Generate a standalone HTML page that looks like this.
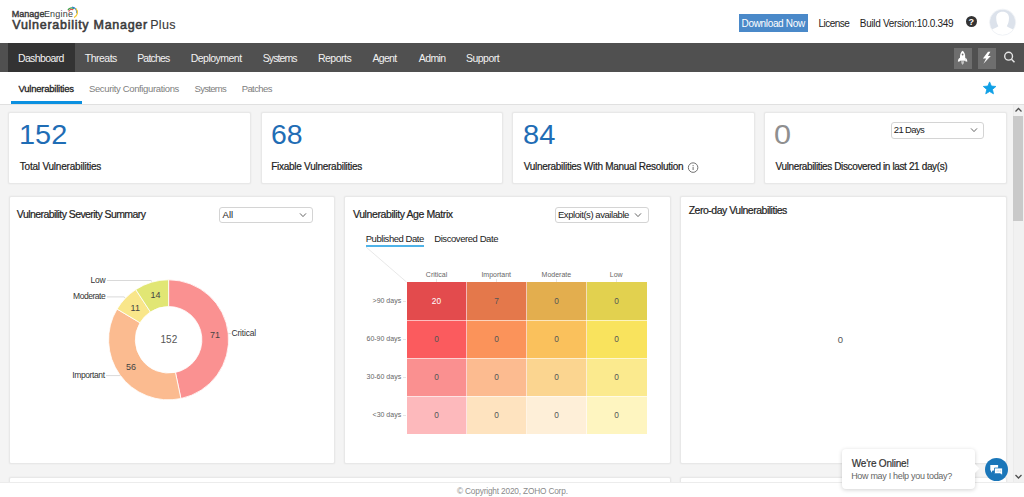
<!DOCTYPE html><html><head><meta charset="utf-8"><style>
*{margin:0;padding:0;box-sizing:border-box}
html,body{width:1024px;height:497px;overflow:hidden;background:#fff;font-family:"Liberation Sans",sans-serif}
.t{position:absolute;line-height:0;white-space:nowrap}
.b{position:absolute}
.card{position:absolute;background:#fff;border:1px solid #e8e8e8;border-radius:2px;box-shadow:0 0 2px rgba(0,0,0,0.07)}
.dd{position:absolute;background:#fff;border:1px solid #d4d4d4;border-radius:3px}
</style></head><body>
<div class="b" style="left:0;top:0;width:1024px;height:43px;background:#fff"></div>
<div class="t" style="left:11.68px;top:13.98px;font-size:9px;color:#3b3b3b;letter-spacing:0.038px;-webkit-text-stroke:0.4px #3b3b3b;">Manage</div>
<div class="t" style="left:43.88px;top:13.98px;font-size:9px;color:#3b3b3b;letter-spacing:0.238px;">Engine</div>
<svg class="b" style="left:0;top:0" width="90" height="25"><path d="M68.71 11.60 A3.1 3.1 0 0 1 73.25 9.72" stroke="#e8504f" stroke-width="1.25" fill="none"/><path d="M67.89 10.20 A4.4 4.4 0 0 1 73.90 8.59" stroke="#3fa34d" stroke-width="1.25" fill="none"/><path d="M72.15 7.22 A5.2 5.2 0 0 1 76.82 13.30" stroke="#2a7bd0" stroke-width="1.25" fill="none"/><path d="M75.73 8.37 A5.7 5.7 0 0 1 74.11 17.57" stroke="#f5cd3a" stroke-width="1.25" fill="none"/></svg>
<div class="t" style="left:12.34px;top:24.97px;font-size:12.5px;color:#3b3b3b;letter-spacing:0.719px;-webkit-text-stroke:0.55px #3b3b3b;">Vulnerability Manager</div>
<div class="t" style="left:150.20px;top:24.97px;font-size:12.5px;color:#3b3b3b;letter-spacing:0.308px;-webkit-text-stroke:0.15px #3b3b3b;">Plus</div>
<div class="b" style="left:739px;top:14px;width:69px;height:18px;background:#4a89c9"></div>
<div class="t" style="left:741.50px;top:23.64px;font-size:10px;color:#fff;letter-spacing:-0.327px;">Download Now</div>
<div class="t" style="left:818.50px;top:23.64px;font-size:10px;color:#222;letter-spacing:-0.517px;">License</div>
<div class="t" style="left:859.80px;top:23.64px;font-size:10px;color:#222;letter-spacing:-0.305px;">Build Version:10.0.349</div>
<div class="b" style="left:965.8px;top:16.2px;width:11px;height:11px;border-radius:50%;background:#333"></div>
<div class="t" style="left:968.60px;top:22.08px;font-size:9px;color:#fff;font-weight:bold;">?</div>
<svg class="b" style="left:988px;top:8px" width="29" height="29" viewBox="0 0 29 29"><defs><clipPath id="cc"><circle cx="14.6" cy="14.2" r="12.8"/></clipPath></defs><circle cx="14.6" cy="14.2" r="12.8" fill="#dce2eb"/><g clip-path="url(#cc)"><path d="M14.6 3.8 C18.6 3.8 21 6.3 21 10 C21 13.5 20 16.2 18.8 18.3 C20.5 19.8 24 20.8 27 22.5 L27 30 L2 30 L2 22.5 C5 20.8 8.7 19.8 10.4 18.3 C9.2 16.2 8.2 13.5 8.2 10 C8.2 6.3 10.6 3.8 14.6 3.8 Z" fill="#fff"/></g><circle cx="14.6" cy="14.2" r="13.1" fill="none" stroke="#eceff3" stroke-width="0.7"/></svg>
<div class="b" style="left:0;top:43px;width:1024px;height:29px;background:#505050"></div>
<div class="b" style="left:8px;top:43px;width:66.5px;height:29px;background:#333333"></div>
<div class="t" style="left:17.91px;top:57.56px;font-size:10.5px;color:#f2f2f2;letter-spacing:-0.603px;">Dashboard</div>
<div class="t" style="left:84.79px;top:57.56px;font-size:10.5px;color:#f2f2f2;letter-spacing:-0.503px;">Threats</div>
<div class="t" style="left:137.16px;top:57.56px;font-size:10.5px;color:#f2f2f2;letter-spacing:-0.792px;">Patches</div>
<div class="t" style="left:190.66px;top:57.56px;font-size:10.5px;color:#f2f2f2;letter-spacing:-0.514px;">Deployment</div>
<div class="t" style="left:262.78px;top:57.56px;font-size:10.5px;color:#f2f2f2;letter-spacing:-0.905px;">Systems</div>
<div class="t" style="left:317.91px;top:57.56px;font-size:10.5px;color:#f2f2f2;letter-spacing:-0.507px;">Reports</div>
<div class="t" style="left:372.50px;top:57.56px;font-size:10.5px;color:#f2f2f2;letter-spacing:-0.713px;">Agent</div>
<div class="t" style="left:418.75px;top:57.56px;font-size:10.5px;color:#f2f2f2;letter-spacing:-0.584px;">Admin</div>
<div class="t" style="left:466.03px;top:57.56px;font-size:10.5px;color:#f2f2f2;letter-spacing:-0.538px;">Support</div>
<div class="b" style="left:954px;top:48px;width:18px;height:21px;background:#6e6e6e"></div>
<div class="b" style="left:978px;top:48px;width:18px;height:21px;background:#6e6e6e"></div>
<svg class="b" style="left:954px;top:48px" width="18" height="21" viewBox="0 0 18 21"><path d="M8.6 2.7 C10.3 3.8 11.2 6 11.2 8.8 L11.2 12.8 L6 12.8 L6 8.8 C6 6 6.9 3.8 8.6 2.7 Z" fill="#fff"/><path d="M6 9.8 C4.8 10.4 3.9 11.5 3.9 13.8 L6 13.2 Z" fill="#fff"/><path d="M11.2 9.8 C12.4 10.4 13.3 11.5 13.3 13.8 L11.2 13.2 Z" fill="#fff"/><path d="M7 13.3 L10.2 13.3 L9.6 15.5 L8.6 17 L7.6 15.5 Z" fill="#fff" fill-opacity="0.6"/><circle cx="8.6" cy="6.5" r="0.9" fill="#6e6e6e"/></svg>
<svg class="b" style="left:978px;top:48px" width="18" height="21" viewBox="0 0 18 21"><path d="M10 3.8 L12.4 3.8 L9.9 8 L12.8 8 L5.4 15.8 L8.2 10.6 L4.9 10.6 Z" fill="#fff"/></svg>
<svg class="b" style="left:1001px;top:49px" width="16" height="16" viewBox="0 0 16 16"><circle cx="7.6" cy="7.2" r="3.9" stroke="#e6e6e6" stroke-width="1.4" fill="none"/><path d="M10.5 10.2 L13.5 13.2" stroke="#e6e6e6" stroke-width="1.5"/></svg>
<div class="b" style="left:0;top:72px;width:1024px;height:33px;background:#fff"></div>
<div class="b" style="left:11px;top:101px;width:70.5px;height:3px;background:#0b90e0"></div>
<div class="b" style="left:0;top:104px;width:1024px;height:1px;background:#e0e0e0"></div>
<div class="t" style="left:18.55px;top:88.71px;font-size:9.5px;color:#222;letter-spacing:-0.238px;-webkit-text-stroke:0.3px #222;">Vulnerabilities</div>
<div class="t" style="left:88.97px;top:88.71px;font-size:9.5px;color:#808080;letter-spacing:-0.358px;">Security Configurations</div>
<div class="t" style="left:194.57px;top:88.71px;font-size:9.5px;color:#808080;letter-spacing:-0.712px;">Systems</div>
<div class="t" style="left:241.64px;top:88.71px;font-size:9.5px;color:#808080;letter-spacing:-0.575px;">Patches</div>
<svg class="b" style="left:978px;top:78px" width="24" height="22"><polygon points="11.60,3.90 13.36,8.07 17.88,8.46 14.45,11.43 15.48,15.84 11.60,13.50 7.72,15.84 8.75,11.43 5.32,8.46 9.84,8.07" fill="#0fa0e6" stroke="#0fa0e6" stroke-width="0.8" stroke-linejoin="round"/></svg>
<div class="b" style="left:0;top:105px;width:1024px;height:377px;background:#f4f4f4"></div>
<div class="card" style="left:8px;top:112px;width:243px;height:72px"></div>
<div class="card" style="left:261px;top:112px;width:242px;height:72px"></div>
<div class="card" style="left:512px;top:112px;width:243px;height:72px"></div>
<div class="card" style="left:764px;top:112px;width:243px;height:72px"></div>
<div class="t" style="left:18.83px;top:135.14px;font-size:27px;color:#1f6db5;transform:scaleX(1.0702);transform-origin:0 0;">152</div>
<div class="t" style="left:271.28px;top:135.14px;font-size:27px;color:#1f6db5;transform:scaleX(1.0530);transform-origin:0 0;">68</div>
<div class="t" style="left:522.99px;top:135.14px;font-size:27px;color:#1f6db5;transform:scaleX(1.0771);transform-origin:0 0;">84</div>
<div class="t" style="left:774.38px;top:135.14px;font-size:27px;color:#8f8f8f;transform:scaleX(1.1343);transform-origin:0 0;">0</div>
<div class="t" style="left:19.80px;top:167.23px;font-size:10px;color:#222;letter-spacing:-0.212px;-webkit-text-stroke:0.2px #222;">Total Vulnerabilities</div>
<div class="t" style="left:271.20px;top:167.23px;font-size:10px;color:#222;letter-spacing:-0.261px;-webkit-text-stroke:0.2px #222;">Fixable Vulnerabilities</div>
<div class="t" style="left:523.65px;top:167.23px;font-size:10px;color:#222;letter-spacing:-0.280px;-webkit-text-stroke:0.2px #222;">Vulnerabilities With Manual Resolution</div>
<div class="t" style="left:775.55px;top:167.23px;font-size:10px;color:#222;letter-spacing:-0.371px;-webkit-text-stroke:0.2px #222;">Vulnerabilities Discovered in last 21 day(s)</div>
<svg class="b" style="left:680px;top:155px" width="25" height="25"><circle cx="13.1" cy="12.6" r="4.75" stroke="#707070" stroke-width="1" fill="none"/><circle cx="13.1" cy="10.6" r="0.65" fill="#707070"/><path d="M13.1 11.9 L13.1 15" stroke="#707070" stroke-width="1"/></svg>
<div class="dd" style="left:891px;top:122px;width:93px;height:16.5px"></div>
<div class="t" style="left:893.82px;top:130.41px;font-size:9.5px;color:#222;letter-spacing:-0.643px;">21 Days</div>
<svg class="b" style="left:969.2px;top:126.4px" width="10" height="8" viewBox="0 0 10 8"><path d="M2.0 2.4 L5 5.6 L8.0 2.4" stroke="#666" stroke-width="1" fill="none"/></svg>
<div class="card" style="left:9px;top:196px;width:326px;height:268px"></div>
<div class="card" style="left:344px;top:196px;width:327px;height:268px"></div>
<div class="card" style="left:680px;top:196px;width:327px;height:268px"></div>
<div class="card" style="left:9px;top:477px;width:662px;height:20px"></div>
<div class="card" style="left:680px;top:477px;width:327px;height:20px"></div>
<div class="t" style="left:16.85px;top:213.96px;font-size:10.5px;color:#222;letter-spacing:-0.563px;-webkit-text-stroke:0.2px #222;">Vulnerability Severity Summary</div>
<div class="t" style="left:352.95px;top:214.06px;font-size:10.5px;color:#222;letter-spacing:-0.400px;-webkit-text-stroke:0.2px #222;">Vulnerability Age Matrix</div>
<div class="t" style="left:688.68px;top:210.06px;font-size:10.5px;color:#222;letter-spacing:-0.489px;-webkit-text-stroke:0.2px #222;">Zero-day Vulnerabilities</div>
<div class="dd" style="left:219px;top:206.5px;width:94px;height:16.5px"></div>
<div class="t" style="left:222.60px;top:215.01px;font-size:9.5px;color:#222;">All</div>
<svg class="b" style="left:297.6px;top:211px" width="10" height="8" viewBox="0 0 10 8"><path d="M2.0 2.4 L5 5.6 L8.0 2.4" stroke="#666" stroke-width="1" fill="none"/></svg>
<div class="dd" style="left:555px;top:206.5px;width:94px;height:16.5px"></div>
<div class="t" style="left:557.94px;top:214.91px;font-size:9.5px;color:#222;letter-spacing:-0.438px;">Exploit(s) available</div>
<svg class="b" style="left:633.2px;top:211px" width="10" height="8" viewBox="0 0 10 8"><path d="M2.0 2.4 L5 5.6 L8.0 2.4" stroke="#666" stroke-width="1" fill="none"/></svg>
<div class="t" style="left:365.74px;top:238.71px;font-size:9.5px;color:#222;letter-spacing:-0.448px;">Published Date</div>
<div class="t" style="left:434.24px;top:238.71px;font-size:9.5px;color:#222;letter-spacing:-0.430px;">Discovered Date</div>
<div class="b" style="left:366px;top:245px;width:58px;height:2px;background:#4fb3e8"></div>
<svg class="b" style="left:0;top:0" width="340" height="480"><path d="M168.60 279.80 A60 60 0 0 1 180.91 398.52 L175.43 372.39 A33.3 33.3 0 0 0 168.60 306.50 Z" fill="#fa9191" stroke="#fff" stroke-width="0.8"/><path d="M180.91 398.52 A60 60 0 0 1 117.06 309.09 L139.99 322.75 A33.3 33.3 0 0 0 175.43 372.39 Z" fill="#fbbb90" stroke="#fff" stroke-width="0.8"/><path d="M117.06 309.09 A60 60 0 0 1 135.78 289.57 L150.39 311.92 A33.3 33.3 0 0 0 139.99 322.75 Z" fill="#f9e68a" stroke="#fff" stroke-width="0.8"/><path d="M135.78 289.57 A60 60 0 0 1 168.60 279.80 L168.60 306.50 A33.3 33.3 0 0 0 150.39 311.92 Z" fill="#e1e674" stroke="#fff" stroke-width="0.8"/><path d="M106.9 280.5 L150.9 280.5 L152 281.5" stroke="#cfcfcf" stroke-width="0.8" fill="none"/><path d="M106.9 296.9 L124 296.9 L125.2 298" stroke="#cfcfcf" stroke-width="0.8" fill="none"/><path d="M228.5 333.6 L231 333.6" stroke="#cfcfcf" stroke-width="0.8" fill="none"/><path d="M106 375.6 L120.5 375.6" stroke="#cfcfcf" stroke-width="0.8" fill="none"/></svg>
<div class="t" style="left:90.62px;top:280.45px;font-size:8.5px;color:#333;letter-spacing:-0.309px;">Low</div>
<div class="t" style="left:73.12px;top:296.25px;font-size:8.5px;color:#333;letter-spacing:-0.479px;">Moderate</div>
<div class="t" style="left:231.47px;top:333.35px;font-size:8.5px;color:#333;letter-spacing:-0.184px;">Critical</div>
<div class="t" style="left:72.23px;top:375.35px;font-size:8.5px;color:#333;letter-spacing:-0.383px;">Important</div>
<div class="t" style="left:150.60px;top:295.28px;font-size:9px;color:#444;">14</div>
<div class="t" style="left:130.61px;top:307.68px;font-size:9px;color:#444;">11</div>
<div class="t" style="left:209.98px;top:335.18px;font-size:9px;color:#444;">71</div>
<div class="t" style="left:126.00px;top:366.58px;font-size:9px;color:#444;">56</div>
<div class="t" style="left:160.55px;top:340.14px;font-size:10px;color:#555;">152</div>
<svg class="b" style="left:0;top:0" width="680" height="480"><path d="M366 247 L406.5 282" stroke="#e2e2e2" stroke-width="0.8"/></svg>
<div class="b" style="left:407px;top:282px;width:60px;height:38px;background:#e34b4d"></div>
<div class="t" style="left:431.83px;top:301.12px;font-size:8.3px;color:#fff;">20</div>
<div class="b" style="left:467px;top:282px;width:60px;height:38px;background:#e4784b"></div>
<div class="t" style="left:494.20px;top:301.12px;font-size:8.3px;color:#555;">7</div>
<div class="b" style="left:527px;top:282px;width:60px;height:38px;background:#e3ae4e"></div>
<div class="t" style="left:554.18px;top:301.12px;font-size:8.3px;color:#555;">0</div>
<div class="b" style="left:587px;top:282px;width:60px;height:38px;background:#e2d14f"></div>
<div class="t" style="left:614.18px;top:301.12px;font-size:8.3px;color:#555;">0</div>
<div class="b" style="left:407px;top:320px;width:60px;height:38px;background:#fb5b5e"></div>
<div class="t" style="left:434.18px;top:339.12px;font-size:8.3px;color:#555;">0</div>
<div class="b" style="left:467px;top:320px;width:60px;height:38px;background:#fb935a"></div>
<div class="t" style="left:494.18px;top:339.12px;font-size:8.3px;color:#555;">0</div>
<div class="b" style="left:527px;top:320px;width:60px;height:38px;background:#fac15c"></div>
<div class="t" style="left:554.18px;top:339.12px;font-size:8.3px;color:#555;">0</div>
<div class="b" style="left:587px;top:320px;width:60px;height:38px;background:#f9e35d"></div>
<div class="t" style="left:614.18px;top:339.12px;font-size:8.3px;color:#555;">0</div>
<div class="b" style="left:407px;top:358px;width:60px;height:38px;background:#fa9090"></div>
<div class="t" style="left:434.18px;top:377.12px;font-size:8.3px;color:#555;">0</div>
<div class="b" style="left:467px;top:358px;width:60px;height:38px;background:#fcbb90"></div>
<div class="t" style="left:494.18px;top:377.12px;font-size:8.3px;color:#555;">0</div>
<div class="b" style="left:527px;top:358px;width:60px;height:38px;background:#fbd590"></div>
<div class="t" style="left:554.18px;top:377.12px;font-size:8.3px;color:#555;">0</div>
<div class="b" style="left:587px;top:358px;width:60px;height:38px;background:#fbea8e"></div>
<div class="t" style="left:614.18px;top:377.12px;font-size:8.3px;color:#555;">0</div>
<div class="b" style="left:407px;top:396px;width:60px;height:38px;background:#fdb9bc"></div>
<div class="t" style="left:434.18px;top:415.12px;font-size:8.3px;color:#555;">0</div>
<div class="b" style="left:467px;top:396px;width:60px;height:38px;background:#fee3bf"></div>
<div class="t" style="left:494.18px;top:415.12px;font-size:8.3px;color:#555;">0</div>
<div class="b" style="left:527px;top:396px;width:60px;height:38px;background:#feefd8"></div>
<div class="t" style="left:554.18px;top:415.12px;font-size:8.3px;color:#555;">0</div>
<div class="b" style="left:587px;top:396px;width:60px;height:38px;background:#fef5c0"></div>
<div class="t" style="left:614.18px;top:415.12px;font-size:8.3px;color:#555;">0</div>
<div class="b" style="left:466px;top:282px;width:1px;height:152px;background:rgba(255,255,255,0.6)"></div>
<div class="b" style="left:526px;top:282px;width:1px;height:152px;background:rgba(255,255,255,0.6)"></div>
<div class="b" style="left:586px;top:282px;width:1px;height:152px;background:rgba(255,255,255,0.6)"></div>
<div class="b" style="left:407px;top:319.5px;width:240px;height:1px;background:rgba(255,255,255,0.6)"></div>
<div class="b" style="left:407px;top:357.5px;width:240px;height:1px;background:rgba(255,255,255,0.6)"></div>
<div class="b" style="left:407px;top:395.5px;width:240px;height:1px;background:rgba(255,255,255,0.6)"></div>
<div class="t" style="left:425.86px;top:274.57px;font-size:7px;color:#666;">Critical</div>
<div class="b" style="left:436px;top:279px;width:1px;height:3px;background:#e6e6e6"></div>
<div class="t" style="left:481.43px;top:274.57px;font-size:7px;color:#666;">Important</div>
<div class="b" style="left:496px;top:279px;width:1px;height:3px;background:#e6e6e6"></div>
<div class="t" style="left:541.59px;top:274.57px;font-size:7px;color:#666;">Moderate</div>
<div class="b" style="left:556px;top:279px;width:1px;height:3px;background:#e6e6e6"></div>
<div class="t" style="left:609.80px;top:274.57px;font-size:7px;color:#666;">Low</div>
<div class="b" style="left:616px;top:279px;width:1px;height:3px;background:#e6e6e6"></div>
<div class="t" style="left:372.55px;top:300.87px;font-size:7px;color:#666;">&gt;90 days</div>
<div class="b" style="left:403px;top:300.5px;width:3px;height:1px;background:#e6e6e6"></div>
<div class="t" style="left:366.49px;top:338.87px;font-size:7px;color:#666;">60-90 days</div>
<div class="b" style="left:403px;top:338.5px;width:3px;height:1px;background:#e6e6e6"></div>
<div class="t" style="left:366.50px;top:376.87px;font-size:7px;color:#666;">30-60 days</div>
<div class="b" style="left:403px;top:376.5px;width:3px;height:1px;background:#e6e6e6"></div>
<div class="t" style="left:372.55px;top:414.87px;font-size:7px;color:#666;">&lt;30 days</div>
<div class="b" style="left:403px;top:414.5px;width:3px;height:1px;background:#e6e6e6"></div>
<div class="t" style="left:837.84px;top:340.21px;font-size:9.5px;color:#555;">0</div>
<div class="b" style="left:1013px;top:105px;width:11px;height:377px;background:#f1f1f1;border-left:1px solid #ebebeb"></div>
<div class="b" style="left:1013px;top:116px;width:10px;height:104.5px;background:#c9c9c9"></div>
<svg class="b" style="left:1013px;top:104px" width="11" height="12"><path d="M2.5 7.5 L5.5 4.5 L8.5 7.5" stroke="#505050" stroke-width="1.3" fill="none"/></svg>
<svg class="b" style="left:1013px;top:470px" width="11" height="12"><path d="M2.5 5 L5.5 8 L8.5 5" stroke="#505050" stroke-width="1.3" fill="none"/></svg>
<div class="b" style="left:0;top:482px;width:1024px;height:15px;background:#fff;border-top:1px solid #ececec"></div>
<div class="t" style="left:456.98px;top:491.12px;font-size:8.3px;color:#8a8a8a;letter-spacing:-0.181px;">© Copyright 2020, ZOHO Corp.</div>
<div class="b" style="left:842px;top:449px;width:133px;height:40px;background:#fff;border-radius:4px;box-shadow:0 1px 4px rgba(0,0,0,0.18)"></div>
<div class="b" style="left:971px;top:465px;width:7px;height:7px;background:#fff;transform:rotate(45deg)"></div>
<div class="t" style="left:851.85px;top:463.74px;font-size:10px;color:#333;letter-spacing:-0.233px;-webkit-text-stroke:0.2px #333;">We&#x27;re Online!</div>
<div class="t" style="left:851.18px;top:475.68px;font-size:9px;color:#666;letter-spacing:-0.313px;">How may I help you today?</div>
<div class="b" style="left:984.8px;top:458.1px;width:23.3px;height:23.3px;border-radius:50%;background:#1a76b9"></div>
<svg class="b" style="left:985px;top:458px" width="23" height="23" viewBox="0 0 23 23"><path d="M5.3 7.1 h7.8 v5.4 h-5.5 l-1.6 2.2 v-2.2 h-0.7 z" fill="#fff"/><path d="M9.5 10 h8 v5.7 h-0.3 v1.8 l-1.8 -1.8 h-5.9 z" fill="#fff" stroke="#1a76b9" stroke-width="0.8"/><path d="M11.6 13 h1.1 M13.3 13 h1.1 M15 13 h1.1" stroke="#9ccbea" stroke-width="1"/></svg>
</body></html>
